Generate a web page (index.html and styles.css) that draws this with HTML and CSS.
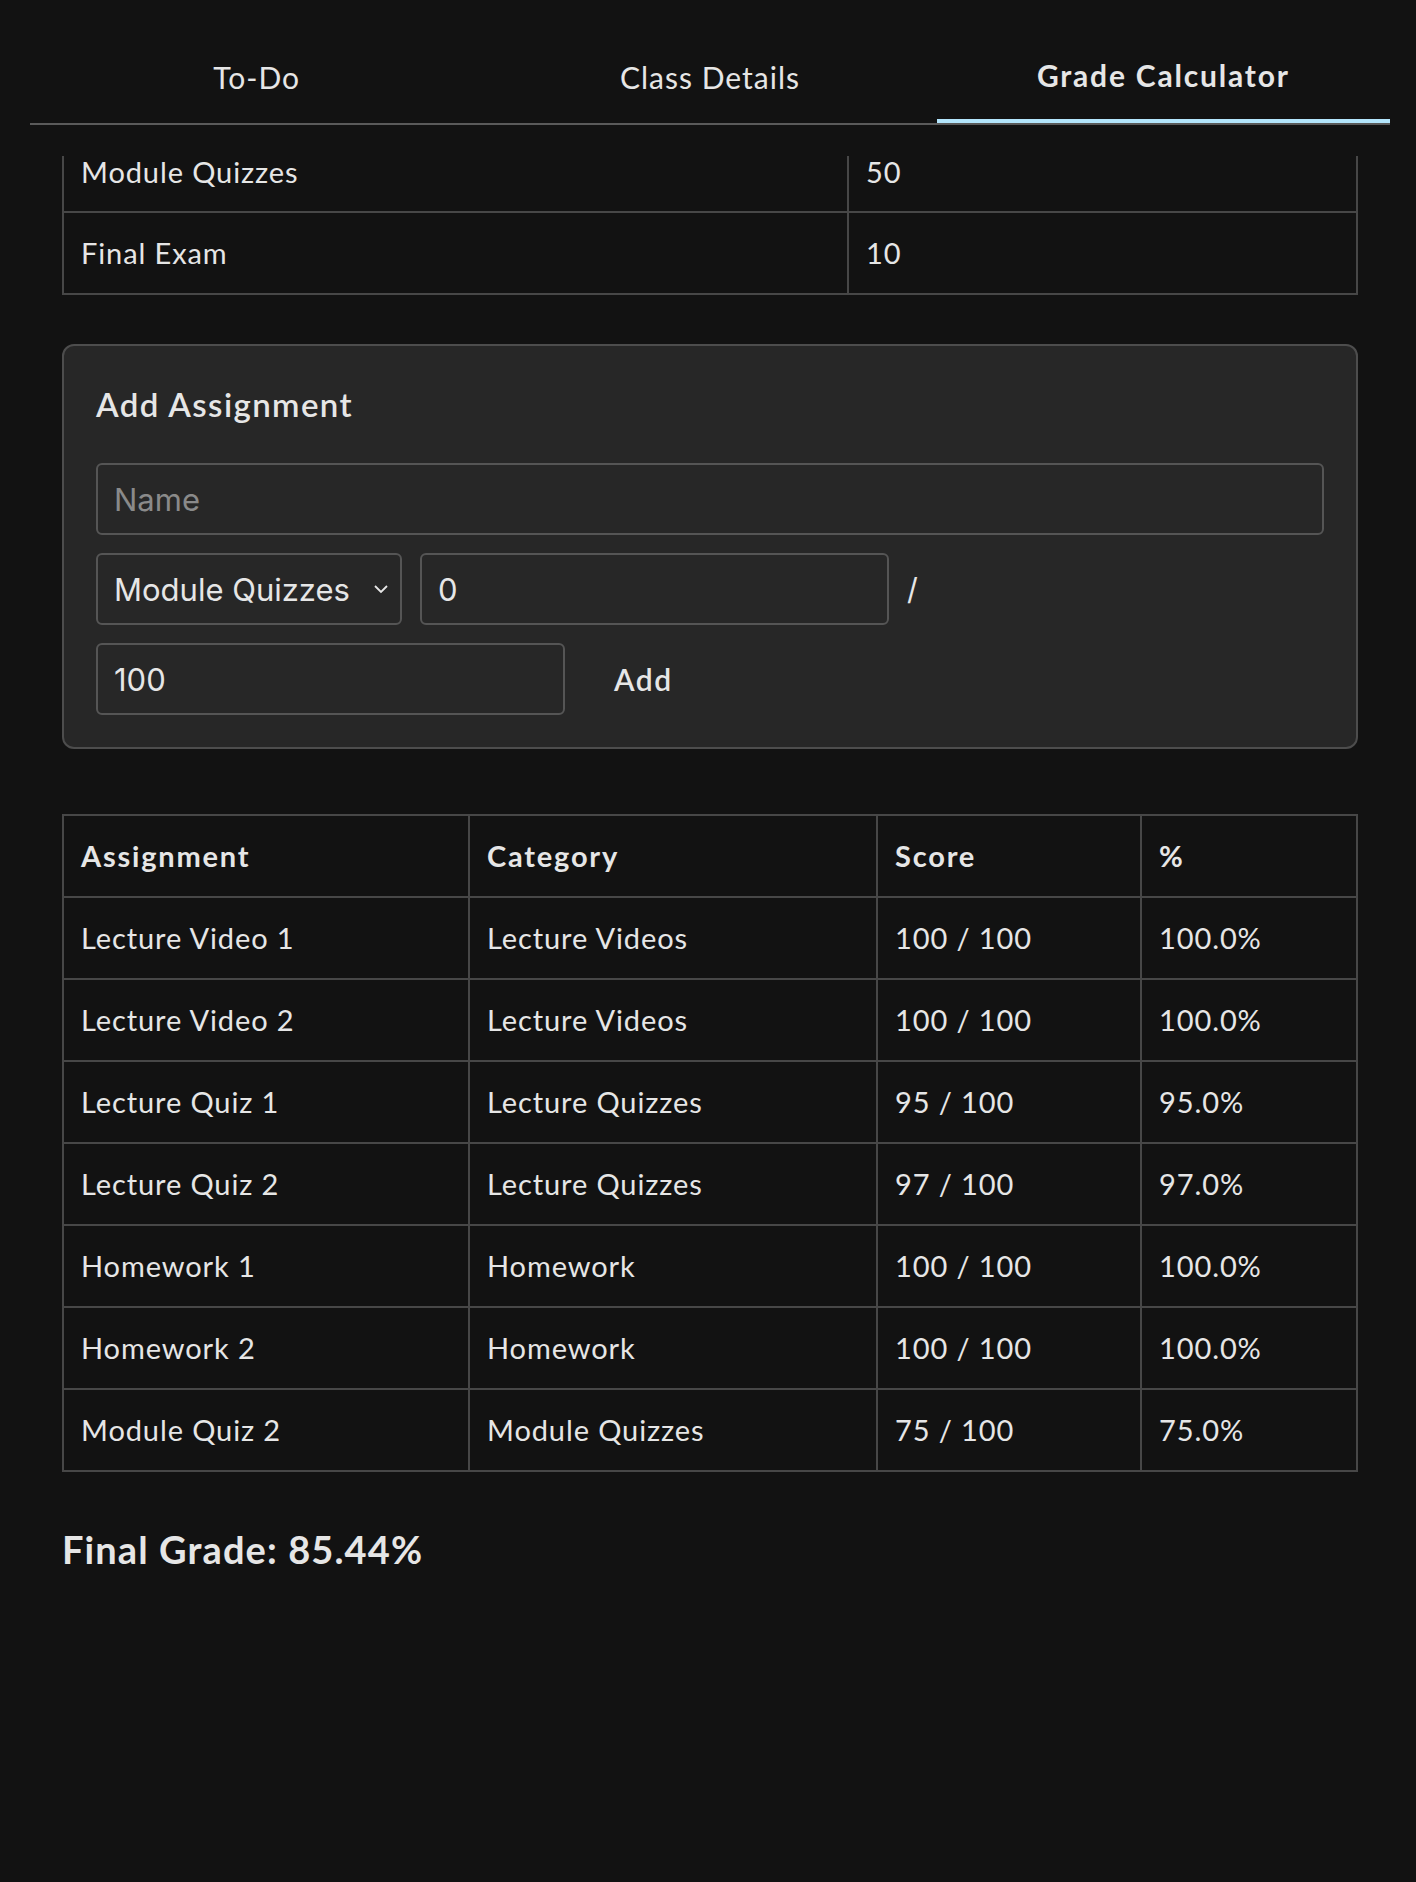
FILE: index.html
```html
<!DOCTYPE html>
<html lang="en">
<head>
    <meta charset="UTF-8">
    <meta name="viewport" content="width=device-width, initial-scale=1.0">
    <title>Grade Calculator</title>
    <link rel="stylesheet" href="styles.css">
</head>
<body>

<div class="app">
    <div class="tabs">
        <button class="tab">To-Do</button>
        <button class="tab">Class Details</button>
        <button class="tab active">Grade Calculator</button>
    </div>

    <div class="content">
        <table class="weights">
            <tr class="cut">
                <td>Module Quizzes</td>
                <td>50</td>
            </tr>
            <tr>
                <td>Final Exam</td>
                <td>10</td>
            </tr>
        </table>

        <div class="card">
            <h3>Add Assignment</h3>
            <div class="form">
                <input type="text" class="name-input" placeholder="Name">
                <select class="cat-select">
                    <option>Lecture Videos</option>
                    <option>Lecture Quizzes</option>
                    <option>Homework</option>
                    <option selected>Module Quizzes</option>
                    <option>Final Exam</option>
                </select>
                <input type="number" class="num-input" value="0">
                <span class="slash">/</span>
                <input type="number" class="num-input" value="100">
                <button class="add-btn">Add</button>
            </div>
        </div>

        <table class="grades">
            <tr>
                <th class="col-name">Assignment</th>
                <th class="col-cat">Category</th>
                <th class="col-score">Score</th>
                <th>%</th>
            </tr>
            <tr>
                <td>Lecture Video 1</td>
                <td>Lecture Videos</td>
                <td>100 / 100</td>
                <td>100.0%</td>
            </tr>
            <tr>
                <td>Lecture Video 2</td>
                <td>Lecture Videos</td>
                <td>100 / 100</td>
                <td>100.0%</td>
            </tr>
            <tr>
                <td>Lecture Quiz 1</td>
                <td>Lecture Quizzes</td>
                <td>95 / 100</td>
                <td>95.0%</td>
            </tr>
            <tr>
                <td>Lecture Quiz 2</td>
                <td>Lecture Quizzes</td>
                <td>97 / 100</td>
                <td>97.0%</td>
            </tr>
            <tr>
                <td>Homework 1</td>
                <td>Homework</td>
                <td>100 / 100</td>
                <td>100.0%</td>
            </tr>
            <tr>
                <td>Homework 2</td>
                <td>Homework</td>
                <td>100 / 100</td>
                <td>100.0%</td>
            </tr>
            <tr>
                <td>Module Quiz 2</td>
                <td>Module Quizzes</td>
                <td>75 / 100</td>
                <td>75.0%</td>
            </tr>
        </table>

        <h2 class="final">Final Grade: 85.44%</h2>
    </div>
</div>

</body>
</html>
```

FILE: styles.css
```css
body {
    margin: 0;
    background-color: #121212;
    color: #e6e6e6;
    font-family: Lato, "Noto Sans", sans-serif;
    font-size: 29px;
    letter-spacing: 0.9px;
    height: 1882px;
    overflow: hidden;
}
.app {
    margin: 0 26px 0 30px;
}
.tabs {
    display: flex;
    border-bottom: 2px solid #5a5a5a;
}
.tab {
    flex: 1;
    background: none;
    border: none;
    color: #e6e6e6;
    font-family: inherit;
    font-size: 30px;
    letter-spacing: 1px;
    line-height: 34px;
    padding: 58px 0 27px;
    cursor: pointer;
}
.tab.active {
    font-weight: 700;
    letter-spacing: 1.8px;
    border-bottom: 4px solid #b3e5fc;
}
.content {
    padding: 31px 32px;
}
table {
    width: 100%;
    border-collapse: collapse;
}
th, td {
    border: 2px solid #474747;
    padding: 23px 17px 23px;
    line-height: 34px;
    text-align: left;
    font-weight: 400;
}
th {
    font-weight: 700;
    letter-spacing: 1.8px;
}
.weights td:first-child {
    width: 749px;
}
.weights .cut td {
    border-top: none;
    padding-top: 0;
    line-height: 32px;
    vertical-align: bottom;
}
.card {
    margin-top: 49px;
    background-color: #272727;
    border: 2px solid #4d4d4d;
    border-radius: 12px;
    padding: 38px 32px 32px;
}
.card h3 {
    margin: 0 0 39px;
    font-size: 33px;
    letter-spacing: 1.4px;
    line-height: 40px;
    font-weight: 600;
}
.form {
    display: flex;
    flex-wrap: wrap;
    align-items: center;
    gap: 18px;
}
input, select {
    box-sizing: border-box;
    height: 72px;
    background-color: #272727;
    color: #e6e6e6;
    border: 2px solid #555;
    border-radius: 6px;
    font-family: Inter, Roboto, sans-serif;
    font-size: 31px;
    letter-spacing: 0;
    padding: 0 16px;
}
input::placeholder {
    color: #8a8a8a;
}
.name-input {
    width: 100%;
}
.cat-select {
    width: 306px;
    appearance: none;
    padding-right: 40px;
    background-image: url("data:image/svg+xml;utf8,<svg xmlns='http://www.w3.org/2000/svg' width='16' height='10' viewBox='0 0 16 10'><path d='M2 2 L8 8 L14 2' fill='none' stroke='%23e6e6e6' stroke-width='1.8'/></svg>");
    background-repeat: no-repeat;
    background-position: right 11px center;
}
.num-input {
    width: 469px;
    -moz-appearance: textfield;
}
.num-input::-webkit-inner-spin-button,
.num-input::-webkit-outer-spin-button {
    -webkit-appearance: none;
    margin: 0;
}
.slash {
    font-family: Inter, Roboto, sans-serif;
    font-size: 30px;
    letter-spacing: 0;
}
.add-btn {
    background: none;
    border: none;
    color: #e6e6e6;
    font-family: inherit;
    font-size: 30px;
    letter-spacing: 1.5px;
    font-weight: 600;
    padding: 10px 31px;
    cursor: pointer;
}
.grades {
    margin-top: 65px;
}
.col-name {
    width: 370px;
}
.col-cat {
    width: 372px;
}
.col-score {
    width: 228px;
}
.final {
    margin: 54px 0 0;
    font-size: 38px;
    letter-spacing: 1.1px;
    line-height: 46px;
    font-weight: 700;
}
```
